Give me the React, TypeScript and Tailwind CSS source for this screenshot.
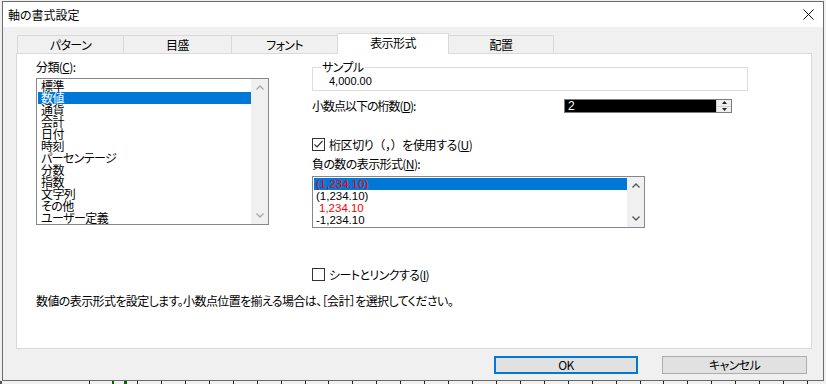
import React from 'react'

const categories = [
  '標準',
  '数値',
  '通貨',
  '会計',
  '日付',
  '時刻',
  'パーセンテージ',
  '分数',
  '指数',
  '文字列',
  'その他',
  'ユーザー定義',
]

const tabs = [
  { label: 'パターン', cls: 'w-[106px] h-[18px] border-l border-t bg-[#f0f0f0]' },
  { label: '目盛', cls: 'w-[108px] h-[18px] border-l border-t bg-[#f0f0f0]' },
  { label: 'フォント', cls: 'w-[106px] h-[18px] border-l border-t bg-[#f0f0f0]' },
  { label: '表示形式', cls: 'w-[112px] h-[21px] -mb-px border-l border-r border-t bg-white relative z-10 pb-[2px]' },
  { label: '配置', cls: 'w-[105px] h-[18px] border-r border-t bg-[#f0f0f0]' },
]

function Chevron({ up, color }: { up?: boolean; color: string }) {
  return (
    <svg width="8" height="5" viewBox="0 0 8 5">
      <polyline
        points={up ? '0.5,4.5 4,1 7.5,4.5' : '0.5,0.5 4,4 7.5,0.5'}
        fill="none"
        stroke={color}
        strokeWidth="1.3"
      />
    </svg>
  )
}

function ScrollBar({ color }: { color: string }) {
  return (
    <div className="w-[17px] bg-[#f0f0f0] flex flex-col justify-between">
      <div className="h-[17px] flex items-center justify-center">
        <Chevron up color={color} />
      </div>
      <div className="h-[17px] flex items-center justify-center">
        <Chevron color={color} />
      </div>
    </div>
  )
}

function CheckBox({ checked }: { checked?: boolean }) {
  return (
    <svg width="13" height="13" viewBox="0 0 13 13" className="shrink-0">
      <rect x="0.5" y="0.5" width="12" height="12" fill="white" stroke="#333" />
      {checked && <polyline points="2.5,6.5 5,9 10.5,3" fill="none" stroke="#333" strokeWidth="1.2" />}
    </svg>
  )
}

function GridStrip() {
  const ticks: number[] = [89]
  for (let i = 0; i < 29; i++) ticks.push(Math.round(137 + i * 23.93))
  return (
    <svg width="826" height="3" className="block">
      <rect width="826" height="3" fill="#f0f0f0" />
      <rect x="0" width="2" height="3" fill="#555" />
      {ticks.map((x) => (
        <rect key={x} x={x} width="1" height="3" fill="#222" />
      ))}
      <rect x="112" width="2" height="3" fill="#0a5e0a" />
      <rect x="124" width="3" height="3" fill="#0a5e0a" />
    </svg>
  )
}

export default function App() {
  return (
    <div className="w-[826px] h-[384px] bg-[#f0f0f0] overflow-hidden text-[12px] text-black font-['Noto_Sans_CJK_JP',sans-serif] [font-feature-settings:'palt'] tracking-[-0.6px]">
      <div className="mt-px ml-[2px] w-[822px] h-[380px] border border-[#6b6b6b] flex flex-col">
        {/* title bar */}
        <div className="h-[25px] bg-white flex items-center justify-between pl-[5px] pr-[9px]">
          <span className="leading-[14px] pt-px tracking-normal">軸の書式設定</span>
          <svg width="11" height="11" viewBox="0 0 11 11">
            <path d="M0.5 0.5 L10.5 10.5 M10.5 0.5 L0.5 10.5" stroke="#111" strokeWidth="1" />
          </svg>
        </div>

        <div className="flex-1 bg-[#f0f0f0] pt-[6px] pl-[13px] pr-[11px]">
          {/* tabs */}
          <div className="h-[20px] flex items-end pl-px">
            {tabs.map((t) => (
              <div
                key={t.label}
                className={`${t.cls} border-[#d9d9d9] flex items-center justify-center leading-[14px]`}
              >
                {t.label}
              </div>
            ))}
          </div>

          {/* panel */}
          <div className="w-[796px] h-[296px] bg-white border border-[#d9d9d9] flex flex-col">
            <div className="flex pl-[19px] pt-[6px]">
              {/* left column */}
              <div className="w-[233px]">
                <div className="h-[14px] leading-[14px]">
                  分類(<span className="underline">C</span>):
                </div>
                <div className="mt-[4px] h-[147px] border border-[#828790] flex">
                  <div className="flex-1 pl-px pt-px">
                    {categories.map((c) => (
                      <div
                        key={c}
                        className={`h-[12px] leading-[12px] pl-[3px] whitespace-nowrap ${
                          c === '数値' ? 'bg-[#0078d7] text-white' : ''
                        }`}
                      >
                        {c}
                      </div>
                    ))}
                  </div>
                  <ScrollBar color="#a8a8a8" />
                </div>
              </div>

              {/* right column */}
              <div className="ml-[43px] w-[436px]">
                <fieldset className="border border-[#dcdcdc] pb-[2px]">
                  <legend className="ml-[8px] px-[1px] h-[14px] leading-[14px]">サンプル</legend>
                  <div className="pl-[16px] h-[14px] leading-[14px] font-['Liberation_Sans','Noto_Sans_CJK_JP',sans-serif] text-[11px] tracking-normal">
                    4,000.00
                  </div>
                </fieldset>

                <div className="mt-[8px] h-[14px] flex items-center">
                  <div className="w-[252px] leading-[14px] tracking-[-1px]">
                    小数点以下の桁数(<span className="underline">D</span>):
                  </div>
                  <div className="w-[168px] h-[14px] border border-[#7a7a7a] flex">
                    <div className="flex-1 bg-black text-white leading-[12px] pl-[3px] font-['Liberation_Sans',sans-serif]">
                      2
                    </div>
                    <div className="w-[15px] bg-[#f0f0f0] border-l border-[#cfcfcf] flex flex-col">
                      <div className="flex-1 flex items-center justify-center border-b border-[#cfcfcf]">
                        <svg width="5" height="3" viewBox="0 0 5 3">
                          <polygon points="0,3 2.5,0 5,3" fill="#222" />
                        </svg>
                      </div>
                      <div className="flex-1 flex items-center justify-center">
                        <svg width="5" height="3" viewBox="0 0 5 3">
                          <polygon points="0,0 2.5,3 5,0" fill="#222" />
                        </svg>
                      </div>
                    </div>
                  </div>
                </div>

                <div className="mt-[25px] h-[13px] flex items-center gap-[4px]">
                  <CheckBox checked />
                  <span className="leading-[14px] tracking-[-0.4px]">
                    桁区切り<span className="[font-feature-settings:normal]">（，）</span>を使用する(<span className="underline">U</span>)
                  </span>
                </div>

                <div className="mt-[6px] h-[14px] leading-[14px]">
                  負の数の表示形式(<span className="underline">N</span>):
                </div>

                <div className="mt-[5px] w-[333px] h-[52px] border border-[#828790] flex">
                  <div className="flex-1 pl-px pt-px font-['Liberation_Sans','Noto_Sans_CJK_JP',sans-serif] text-[11.5px] tracking-normal">
                    <div className="h-[12px] leading-[12px] pl-[2px] bg-[#0078d7] text-[#ff0000]">(1,234.10)</div>
                    <div className="h-[12px] leading-[12px] pl-[2px]">(1,234.10)</div>
                    <div className="h-[12px] leading-[12px] pl-[5px] text-[#ff0000]">1,234.10</div>
                    <div className="h-[12px] leading-[12px] pl-[2px]">-1,234.10</div>
                  </div>
                  <ScrollBar color="#555" />
                </div>

                <div className="mt-[40px] h-[13px] flex items-center gap-[4px]">
                  <CheckBox />
                  <span className="leading-[14px]">
                    シートとリンクする(<span className="underline">I</span>)
                  </span>
                </div>
              </div>
            </div>

            <div className="mt-[13px] pl-[19px] h-[14px] leading-[14px] whitespace-nowrap">
              数値の表示形式を設定します。小数点位置を揃える場合は、［会計］を選択してください。
            </div>
          </div>

          {/* buttons */}
          <div className="mt-[7px] flex justify-end gap-[24px] pr-[5px]">
            <button className="w-[144px] h-[18px] border-2 border-[#0078d7] bg-[#e1e1e1] flex items-center justify-center leading-[14px]">
              OK
            </button>
            <button className="w-[145px] h-[18px] border border-[#adadad] bg-[#e1e1e1] flex items-center justify-center leading-[14px]">
              キャンセル
            </button>
          </div>
        </div>
      </div>
      <GridStrip />
    </div>
  )
}
